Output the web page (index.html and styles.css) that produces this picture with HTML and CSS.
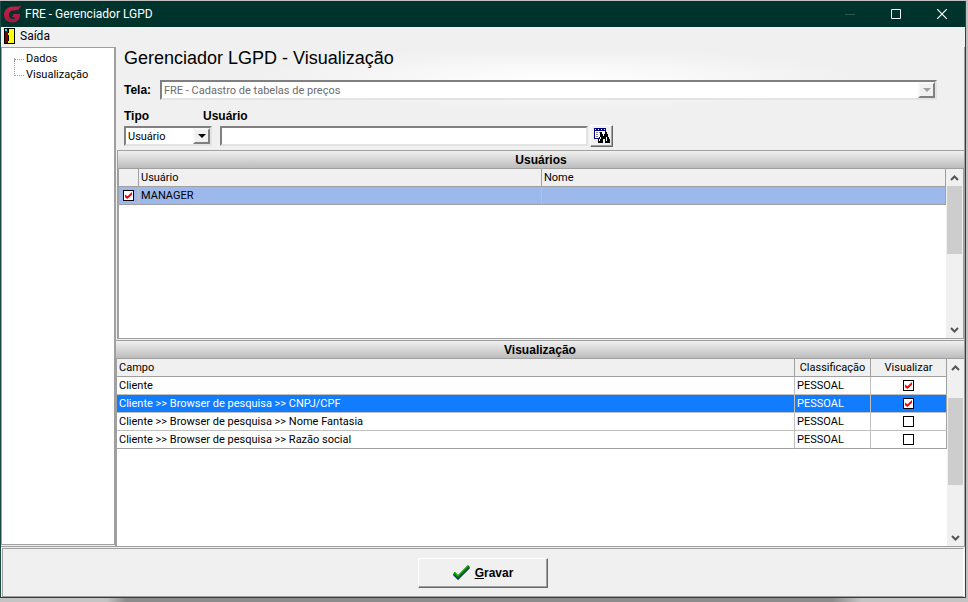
FILE: index.html
```html
<!DOCTYPE html>
<html lang="pt-BR">
<head>
    <meta charset="UTF-8">
    <meta name="viewport" content="width=device-width, initial-scale=1.0">
    <title>FRE - Gerenciador LGPD</title>
    <link rel="stylesheet" href="styles.css">
</head>
<body>
    <div class="window">
        <header class="titlebar">
            <svg width="17" height="17" viewBox="0 0 17 17">
                <defs>
                    <linearGradient id="logo-fill" x1="0" y1="0" x2="0" y2="1">
                        <stop offset="0" stop-color="#c4204a"/>
                        <stop offset="1" stop-color="#a5173f"/>
                    </linearGradient>
                </defs>
                <path d="M17 0 C15 4 13 4.500 9.500 4.500 C6.500 4.500 5 6.500 5 9 C5 11.500 6.500 13 8.500 13 C10 13 11 12.500 11.500 11.500 L8 11.500 L9.500 8 L16 8 C16 13.500 13.500 16.500 8.500 16.500 C3.500 16.500 0 13.500 0 9 C0 3.500 4 .5 10 .5 C13 .5 15 .5 17 0 Z" fill="url(#logo-fill)"/>
            </svg>
            <span class="title">FRE - Gerenciador LGPD</span>
            <button class="window-button" aria-label="Minimizar" disabled>
                <svg width="10" height="10" viewBox="0 0 10 10"><path d="M0 5.500H10" stroke="#31584f"/></svg>
            </button>
            <button class="window-button" aria-label="Maximizar">
                <svg width="10" height="10" viewBox="0 0 10 10"><path d="M.5 .5H9.500V9.500H.5Z" fill="none" stroke="#fff"/></svg>
            </button>
            <button class="window-button" aria-label="Fechar">
                <svg width="10" height="10" viewBox="0 0 10 10"><path d="M0 0L10 10M10 0L0 10" stroke="#fff" stroke-width="1.200"/></svg>
            </button>
        </header>

        <nav class="menubar">
            <button class="menu-item">
                <svg width="11" height="16" viewBox="0 0 11 16" shape-rendering="crispEdges">
                    <path d="M0 0H11V16H0Z" fill="#000"/>
                    <path d="M5 1H10V15H4V13H5Z" fill="#ff0"/>
                    <path d="M1 3H4V14H3V15H1Z" fill="#800000"/>
                    <path d="M1 1H3V3H1Z" fill="#0ff"/>
                    <path d="M4 5H5V7H4Z" fill="#ff0"/>
                </svg>
                Saída
            </button>
        </nav>

        <div class="content">
            <aside class="sidebar">
                <ul class="tree">
                    <li><a href="#dados">Dados</a></li>
                    <li><a href="#visualizacao">Visualização</a></li>
                </ul>
            </aside>

            <main class="main">
                <form class="filters">
                    <h1>Gerenciador LGPD - Visualização</h1>
                    <div class="screen-row">
                        <label for="tela">Tela:</label>
                        <div class="select-box disabled">
                            <select id="tela" disabled>
                                <option>FRE - Cadastro de tabelas de preços</option>
                            </select>
                            <span class="select-arrow"></span>
                        </div>
                    </div>
                    <div class="user-labels">
                        <label for="tipo">Tipo</label>
                        <label for="usuario">Usuário</label>
                    </div>
                    <div class="user-row">
                        <div class="select-box type-box">
                            <select id="tipo">
                                <option>Usuário</option>
                            </select>
                            <span class="select-arrow"></span>
                        </div>
                        <input id="usuario" class="text-box" type="text">
                        <button class="search-button" type="button" aria-label="Pesquisar">
                            <svg width="16" height="16" viewBox="0 0 16 16" shape-rendering="crispEdges">
                                <path d="M0 0H12V11H0Z" fill="#000080"/>
                                <path d="M1 3H11V10H1Z" fill="#fff"/>
                                <path d="M1 1H2V2H1ZM4 1H5V2H4ZM7 1H8V2H7ZM10 1H11V2H10Z" fill="#fff"/>
                                <path d="M2 4H4V5H2ZM5 4H7V5H5ZM2 6H4V7H2ZM2 8H4V9H2Z" fill="#808080"/>
                                <path d="M6 4H8V6H9V8H10V6H11V4H13V6H14V9H15V11H16V15H11V11H9V15H4V11H5V9H6Z" fill="#000"/>
                                <path d="M6 9H7V11H6V13H5V11H6ZM12 9H13V13H12Z" fill="#fff"/>
                            </svg>
                        </button>
                    </div>
                </form>

                <section class="panel users-panel">
                    <h2>Usuários</h2>
                    <div class="grid">
                        <div class="grid-body">
                            <table>
                                <colgroup><col class="col-check"><col class="col-user"><col></colgroup>
                                <thead>
                                    <tr><th></th><th>Usuário</th><th>Nome</th></tr>
                                </thead>
                                <tbody>
                                    <tr class="current">
                                        <td class="center"><input type="checkbox" aria-label="MANAGER" checked></td>
                                        <td>MANAGER</td>
                                        <td></td>
                                    </tr>
                                </tbody>
                            </table>
                        </div>
                        <div class="scrollbar">
                            <svg width="9" height="6" viewBox="0 0 9 6"><path d="M1 5L4.500 1.500L8 5" fill="none" stroke="#555" stroke-width="2"/></svg>
                            <span class="thumb"></span>
                            <svg class="down" width="9" height="6" viewBox="0 0 9 6"><path d="M1 1L4.500 4.500L8 1" fill="none" stroke="#555" stroke-width="2"/></svg>
                        </div>
                    </div>
                </section>

                <section class="panel fields-panel">
                    <h2>Visualização</h2>
                    <div class="grid">
                        <div class="grid-body">
                            <table>
                                <colgroup><col><col class="col-class"><col class="col-view"></colgroup>
                                <thead>
                                    <tr><th>Campo</th><th class="center">Classificação</th><th class="center">Visualizar</th></tr>
                                </thead>
                                <tbody>
                                    <tr>
                                        <td>Cliente</td>
                                        <td>PESSOAL</td>
                                        <td class="center"><input type="checkbox" aria-label="Cliente" checked></td>
                                    </tr>
                                    <tr class="selected">
                                        <td>Cliente &gt;&gt; Browser de pesquisa &gt;&gt; CNPJ/CPF</td>
                                        <td>PESSOAL</td>
                                        <td class="center"><input type="checkbox" aria-label="CNPJ/CPF" checked></td>
                                    </tr>
                                    <tr>
                                        <td>Cliente &gt;&gt; Browser de pesquisa &gt;&gt; Nome Fantasia</td>
                                        <td>PESSOAL</td>
                                        <td class="center"><input type="checkbox" aria-label="Nome Fantasia"></td>
                                    </tr>
                                    <tr>
                                        <td>Cliente &gt;&gt; Browser de pesquisa &gt;&gt; Razão social</td>
                                        <td>PESSOAL</td>
                                        <td class="center"><input type="checkbox" aria-label="Razão social"></td>
                                    </tr>
                                </tbody>
                            </table>
                        </div>
                        <div class="scrollbar">
                            <svg width="9" height="6" viewBox="0 0 9 6"><path d="M1 5L4.500 1.500L8 5" fill="none" stroke="#555" stroke-width="2"/></svg>
                            <span class="thumb"></span>
                            <svg class="down" width="9" height="6" viewBox="0 0 9 6"><path d="M1 1L4.500 4.500L8 1" fill="none" stroke="#555" stroke-width="2"/></svg>
                        </div>
                    </div>
                </section>
            </main>
        </div>

        <footer class="footer">
            <button class="save-button">
                <svg width="17" height="16" viewBox="0 0 17 16">
                    <path d="M1 9L5 13L16 2" fill="none" stroke="#000080" stroke-width="3"/>
                    <path d="M1 8L5 12L16 1" fill="none" stroke="#008000" stroke-width="3"/>
                    <path d="M1 7L5 11L15 1" fill="none" stroke="#00c000"/>
                </svg>
                <span><u>G</u>ravar</span>
            </button>
        </footer>
    </div>
</body>
</html>
```

FILE: styles.css
```css
* {
    box-sizing: border-box;
}

body {
    margin: 0;
    height: 100vh;
    padding: 1px 2px 4px 0;
    background: linear-gradient(90deg, #c4c4c4 11%, #8c8c8c 13%, #8c8c8c 86%, #c4c4c4 89%) bottom / 100% 4px no-repeat #c0c0c0;
    font-family: Roboto, "Liberation Sans", sans-serif;
    font-size: 11px;
    color: #000;
}

button,
select,
input {
    font: inherit;
    color: inherit;
}

.window {
    display: flex;
    flex-direction: column;
    height: 100%;
    background: #f0f0f0;
    border: 1px solid #1d4a44;
    border-top: 0;
}

/* Title bar */
.titlebar {
    display: flex;
    align-items: center;
    height: 26px;
    padding-left: 3px;
    background: #00332c;
    color: #fff;
    font-size: 12px;
}

.title {
    flex: 1;
    padding-left: 4px;
}

.window-button {
    display: flex;
    align-items: center;
    justify-content: center;
    width: 46px;
    height: 26px;
    padding: 0;
    border: 0;
    background: none;
}

.menubar {
    height: 20px;
    padding-left: 3px;
}

.menu-item {
    display: flex;
    align-items: center;
    gap: 5px;
    height: 18px;
    padding: 0;
    border: 0;
    background: none;
    font-size: 12px;
}

.content {
    display: flex;
    flex: 1;
    min-height: 0;
    border-bottom: 1px solid #a0a0a0;
}

/* Navigation tree */
.sidebar {
    width: 114px;
    margin-bottom: 1px;
    padding: 3px 0 0 12px;
    background: #fff;
    border: 1px solid #a0a0a0;
}

.tree {
    margin: 0;
    padding: 0;
    list-style: none;
}

.tree li {
    position: relative;
    height: 16px;
    padding-left: 12px;
    line-height: 16px;
}

.tree li::before {
    content: "";
    position: absolute;
    left: 0;
    top: -8px;
    width: 9px;
    height: 16px;
    border-left: 1px dotted #a0a0a0;
    border-bottom: 1px dotted #a0a0a0;
}

.tree li:first-child::before {
    top: 7px;
    height: 1px;
}

.tree a {
    color: inherit;
    text-decoration: none;
}

.main {
    display: flex;
    flex-direction: column;
    flex: 1;
    min-width: 0;
    border-left: 1px solid #a0a0a0;
    border-right: 1px solid #a0a0a0;
}

/* Filters */
.filters {
    height: 102px;
    padding: 1px 27px 0 8px;
    background: radial-gradient(ellipse 300px 30px at 52% 32px, #fff, #f0f0f0);
    font-family: "Liberation Sans", Arial, sans-serif;
}

h1 {
    margin: 0;
    font-size: 18px;
    line-height: 20px;
    font-weight: normal;
}

label {
    font-size: 12px;
    font-weight: bold;
}

.screen-row {
    display: flex;
    align-items: center;
    margin-top: 12px;
}

.screen-row label {
    width: 36px;
}

.screen-row .select-box {
    flex: 1;
}

.select-box,
.text-box {
    display: flex;
    height: 20px;
    background: #fff;
    border: 2px solid;
    border-color: #808080 #e3e3e3 #e3e3e3 #808080;
    font-family: Roboto, "Liberation Sans", sans-serif;
}

.select-box select {
    flex: 1;
    min-width: 0;
    padding: 0 2px;
    border: 0;
    background: none;
    appearance: none;
}

.select-box.disabled select {
    color: #6d6d6d;
    opacity: 1;
}

.select-arrow {
    display: flex;
    align-items: center;
    justify-content: center;
    width: 17px;
    background: #f0f0f0;
    border: 2px solid;
    border-color: #f8f8f8 #808080 #808080 #f8f8f8;
}

.select-arrow::before {
    content: "";
    border: 4px solid transparent;
    border-top-color: #000;
    border-bottom: 0;
}

.disabled .select-arrow::before {
    border-top-color: #a0a0a0;
}

.user-labels {
    display: flex;
    margin-top: 8px;
    line-height: 16px;
}

.user-labels label:first-child {
    width: 79px;
}

.user-row {
    display: flex;
    align-items: center;
    margin-top: 1px;
}

.type-box {
    width: 88px;
}

.text-box {
    flex: 0 1 368px;
    min-width: 0;
    margin-left: 8px;
}

.search-button {
    display: flex;
    align-items: center;
    justify-content: center;
    width: 23px;
    height: 22px;
    margin-left: 2px;
    padding: 0;
    background: #f0f0f0;
    border: 1px solid;
    border-color: #fff #696969 #696969 #fff;
    box-shadow: inset -1px -1px #a0a0a0;
}

/* Panels */
.panel {
    display: flex;
    flex-direction: column;
    border-top: 1px solid #a0a0a0;
}

.users-panel {
    height: 189px;
    margin: 1px 0 0 1px;
    border-left: 1px solid #a0a0a0;
    border-bottom: 1px solid #a0a0a0;
}

.fields-panel {
    flex: 1;
    min-height: 0;
    margin-top: 1px;
}

h2 {
    margin: 0;
    height: 18px;
    border-bottom: 1px solid #a0a0a0;
    background: linear-gradient(#f0f0f0, #bcbcbc);
    font-family: "Liberation Sans", Arial, sans-serif;
    font-size: 12px;
    line-height: 18px;
    text-align: center;
}

.grid {
    display: flex;
    flex: 1;
    min-height: 0;
    background: #fff;
    border-left: 1px solid #a0a0a0;
}

.users-panel .grid {
    border-right: 1px solid #a0a0a0;
}

.grid-body {
    flex: 1;
}

table {
    width: 100%;
    table-layout: fixed;
    border-collapse: separate;
    border-spacing: 0;
}

th,
td {
    height: 18px;
    padding: 0 2px;
    border-right: 1px solid #c0c0c0;
    border-bottom: 1px solid #c0c0c0;
    line-height: 16px;
    text-align: left;
    white-space: nowrap;
}

th {
    background: #f0f0f0;
    border-color: #a0a0a0;
    font-weight: normal;
}

td:last-child {
    border-right-color: #a0a0a0;
}

tbody tr:last-child td {
    border-bottom-color: #a0a0a0;
}

.center {
    text-align: center;
}

.col-check {
    width: 20px;
}

.col-user {
    width: 403px;
}

.col-class,
.col-view {
    width: 76px;
}

.current td {
    background: #9db8eb;
}

.selected td {
    background: #127cff;
    color: #fff;
}

input[type="checkbox"] {
    display: block;
    width: 11px;
    height: 11px;
    margin: 0 auto;
    border: 1px solid #000;
    background: #fff;
    appearance: none;
}

input[type="checkbox"]:checked::before {
    content: "";
    display: block;
    width: 7px;
    height: 7px;
    margin: 1px;
    background: #f00;
    clip-path: polygon(0 35%, 35% 60%, 100% 0, 100% 40%, 35% 100%, 0 75%);
}

.scrollbar {
    display: flex;
    flex-direction: column;
    align-items: center;
    width: 17px;
    padding: 6px 0 5px;
    background: #f0f0f0;
}

.thumb {
    width: 15px;
    height: 68px;
    margin-top: 5px;
    background: #cdcdcd;
}

.fields-panel .thumb {
    height: 87px;
    margin-top: 27px;
}

.down {
    margin-top: auto;
}

/* Footer */
.footer {
    display: flex;
    justify-content: center;
    height: 49px;
    margin: 1px 1px 0;
    padding-top: 9px;
    border: 1px solid;
    border-color: #a0a0a0 #fff #a0a0a0 #a0a0a0;
}

.save-button {
    display: flex;
    align-items: center;
    justify-content: center;
    gap: 5px;
    width: 130px;
    height: 30px;
    padding: 0;
    background: #f0f0f0;
    border: 1px solid;
    border-color: #fff #696969 #696969 #fff;
    box-shadow: inset -1px -1px #a0a0a0;
    font-family: "Liberation Sans", Arial, sans-serif;
    font-size: 12px;
    font-weight: bold;
}
```
